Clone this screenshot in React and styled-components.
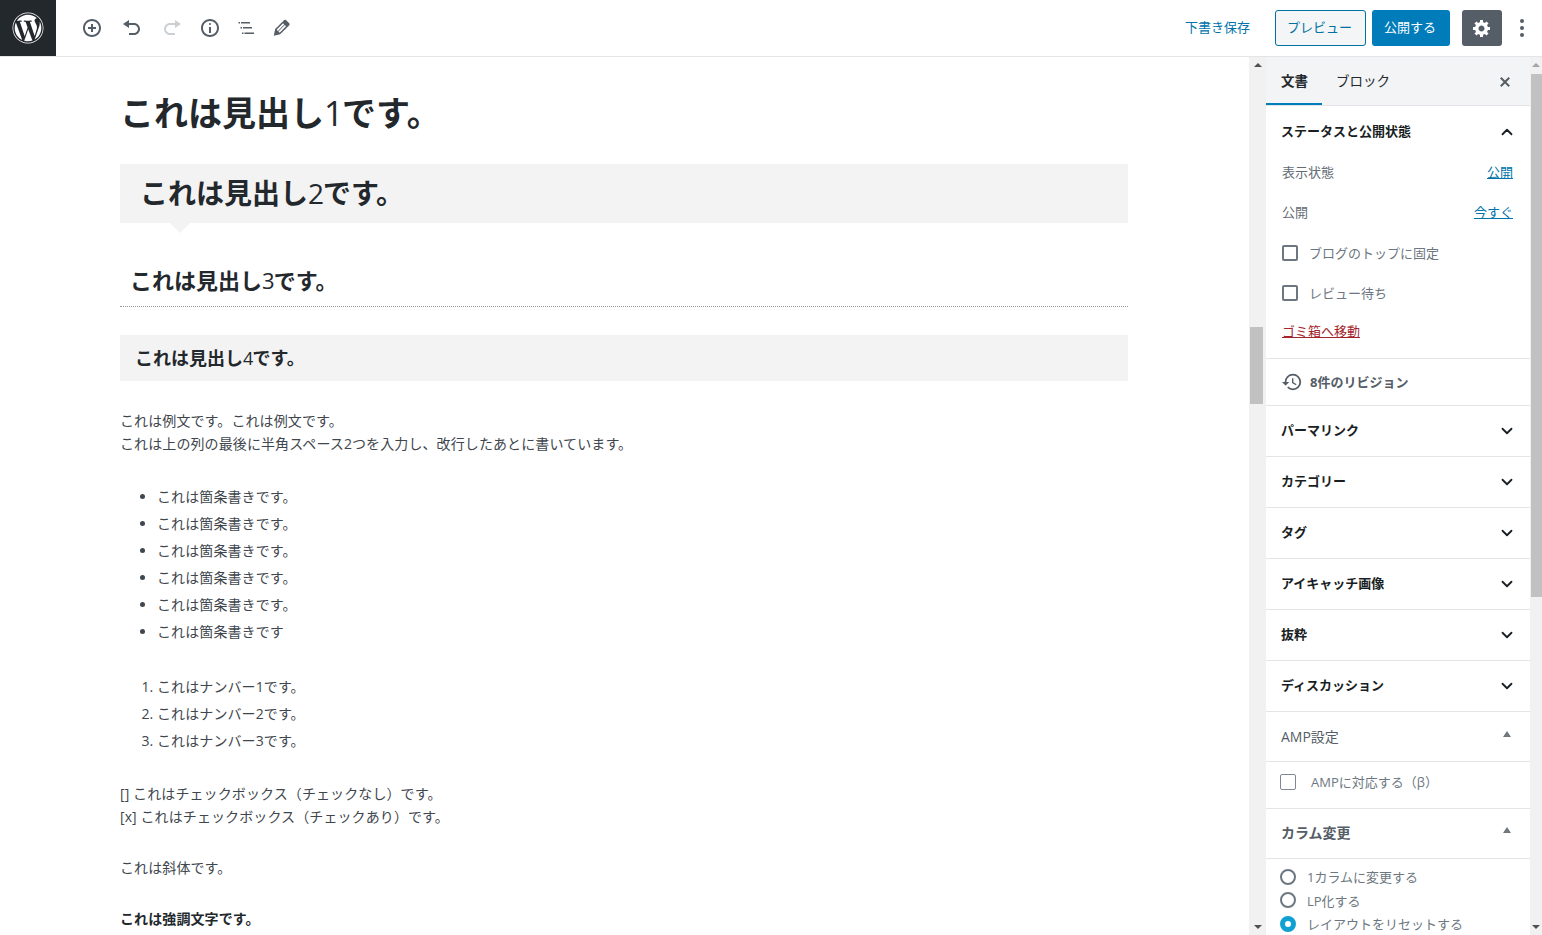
import React from 'react';
import styled, { createGlobalStyle, css } from 'styled-components';
import { FaWordpress } from 'react-icons/fa';
import { MdHistory } from 'react-icons/md';
import { ChevronDown, ChevronUp } from 'lucide-react';

const FONT = `"Open Sans", "Noto Sans CJK JP", sans-serif`;

const GlobalStyle = createGlobalStyle`
  html, body { margin: 0; padding: 0; height: 100%; overflow: hidden; background: #fff; }
  body { font-family: ${FONT}; color: #23282d; }
  * { box-sizing: border-box; }
`;

const Page = styled.div`
  display: flex;
  flex-direction: column;
  width: 1542px;
  height: 935px;
  overflow: hidden;
`;

const Header = styled.header`
  display: flex;
  align-items: center;
  height: 57px;
  flex: none;
  border-bottom: 1px solid #e2e4e7;
`;

const LogoBox = styled.div`
  width: 56px;
  height: 56px;
  background: #23282d;
  color: #fff;
  display: flex;
  align-items: center;
  justify-content: center;
  font-size: 32px;
`;

const Tools = styled.div`
  display: flex;
  align-items: center;
  margin-left: 16px;
  flex: 1;
`;

const ToolButton = styled.div`
  width: ${p => p.$w}px;
  display: flex;
  justify-content: center;
`;

const Icon = styled.svg`
  width: 20px;
  height: 20px;
  fill: ${p => (p.$off ? '#ccd0d4' : '#555d66')};
  display: block;
`;

const SaveDraft = styled.span`
  font-size: 13px;
  color: #0073aa;
  margin: 0 25px 3px 0;
`;

const Button = styled.div`
  height: 36px;
  display: flex;
  align-items: center;
  justify-content: center;
  border-radius: 3px;
  font-size: 13px;
  padding: 0 2px 3px 0;
  ${p =>
    p.$primary
      ? css`
          width: 78px;
          margin-left: 6px;
          background: #007cba;
          color: #fff;
        `
      : css`
          width: 91px;
          background: #f3f5f6;
          border: 1px solid #0071a1;
          color: #0071a1;
        `}
`;

const GearButton = styled.div`
  width: 40px;
  height: 36px;
  margin-left: 12px;
  border-radius: 3px;
  background: #555d66;
  display: flex;
  align-items: center;
  justify-content: center;
`;

const GearIcon = styled.svg`
  width: 20px;
  height: 20px;
  fill: #fff;
`;

const Dots = styled.div`
  width: 40px;
  display: flex;
  flex-direction: column;
  align-items: center;
  gap: 3px;
  i {
    width: 4px;
    height: 4px;
    border-radius: 50%;
    background: #555d66;
  }
`;

const Body = styled.div`
  display: flex;
  flex: 1;
  min-height: 0;
`;

const Editor = styled.main`
  width: 1249px;
  flex: none;
  overflow: hidden;
  padding: 0 121px 0 120px;
`;

const Track = styled.div`
  width: ${p => p.$w}px;
  flex: none;
  background: #f1f1f1;
  display: flex;
  flex-direction: column;
  align-items: center;
  justify-content: space-between;
  position: relative;
`;

const Arrow = styled.i`
  width: 0;
  height: 0;
  margin: 6px 0;
  border-left: 4px solid transparent;
  border-right: 4px solid transparent;
  ${p => (p.$down ? 'border-top' : 'border-bottom')}: 4px solid ${p => p.$c || '#505050'};
`;

const Thumb = styled.div`
  position: absolute;
  left: ${p => p.$l}px;
  right: ${p => p.$r}px;
  top: ${p => p.$top}px;
  height: ${p => p.$h}px;
  background: #c1c1c1;
`;

// the digits in the headings stay at regular weight
const Digit = styled.span`
  font-weight: 400;
  letter-spacing: -0.04em;
`;

const H1 = styled.h1`
  margin: 33px 0 0;
  font-size: 34px;
  line-height: 46px;
  font-weight: 700;
  color: #23282d;
`;

const H2 = styled.h2`
  position: relative;
  margin: 28px 0 0;
  height: 59px;
  padding-left: 20px;
  background: #f3f3f3;
  font-size: 28px;
  line-height: 59px;
  font-weight: 700;
  &::after {
    content: '';
    position: absolute;
    left: 50px;
    top: 59px;
    border-left: 10px solid transparent;
    border-right: 10px solid transparent;
    border-top: 10px solid #f3f3f3;
  }
`;

const H3 = styled.h3`
  margin: 36px 0 0;
  height: 48px;
  padding-left: 10px;
  border-bottom: 1px dotted #999;
  font-size: 22px;
  line-height: 43px;
  font-weight: 700;
`;

const H4 = styled.h4`
  margin: 28px 0 0;
  height: 46px;
  padding-left: 15px;
  background: #f3f3f3;
  font-size: 18px;
  line-height: 46px;
  font-weight: 700;
`;

const Para = styled.p`
  margin: ${p => p.$top}px 0 0;
  font-size: 14px;
  line-height: 23px;
  letter-spacing: 0.1px;
  color: #40464d;
  strong {
    color: #23282d;
  }
`;

const ListBlock = styled.ul`
  margin: 28px 0 0;
  padding: 0 0 0 37px;
  font-size: 14px;
  line-height: 27px;
  letter-spacing: 0.1px;
  color: #40464d;
`;

const NumBlock = styled(ListBlock).attrs({ as: 'ol' })``;

const Sidebar = styled.aside`
  width: 264px;
  flex: none;
  overflow: hidden;
`;

const Tabs = styled.div`
  display: flex;
  align-items: center;
  height: 49px;
  background: #f3f4f5;
  border-bottom: 1px solid #e2e4e7;
  position: relative;
`;

const Tab = styled.div`
  height: 48px;
  display: flex;
  align-items: center;
  padding: 0 14px 2px 15px;
  font-size: 13.5px;
  color: #23282d;
  font-weight: ${p => (p.$on ? 700 : 400)};
  ${p => p.$on && 'box-shadow: inset 0 -2px 0 #007cba;'}
  ${p => !p.$on && 'padding-left: 14px;'}
`;

const CloseIcon = styled.svg`
  position: absolute;
  right: 15px;
  top: 15px;
  width: 20px;
  height: 20px;
  fill: #555d66;
`;

const Panel = styled.section`
  border-bottom: 1px solid #e2e4e7;
`;

const PanelHead = styled.div`
  display: flex;
  align-items: center;
  justify-content: space-between;
  height: 50px;
  padding: 0 14px 4px 15px;
  font-size: 13px;
  font-weight: 700;
  color: #191e23;
  svg {
    margin-top: 3px;
  }
`;

const StatusHead = styled(PanelHead)`
  padding-bottom: 2px;
`;

const OptionHead = styled(PanelHead)`
  height: 49px;
  padding-bottom: ${p => p.$pb}px;
  font-size: 14px;
  font-weight: ${p => p.$weight};
  color: #555d66;
`;

const StatusBody = styled.div`
  margin-top: -4px;
`;

const StatusRow = styled.div`
  display: flex;
  justify-content: space-between;
  align-items: center;
  height: 40px;
  padding: 0 17px 2px 16px;
  font-size: 13px;
  color: #646c75;
  a {
    font-size: 13px;
    color: #0073aa;
    text-decoration: underline;
  }
`;

const CheckRow = styled.label`
  display: flex;
  align-items: center;
  height: 40px;
  padding-left: 16px;
  gap: 11px;
  font-size: 13px;
  color: #6c7781;
`;

const CheckBox = styled.span`
  width: 16px;
  height: 16px;
  flex: none;
  margin-top: 2px;
  border: 2px solid #6c7781;
  border-radius: 2px;
`;

const TrashLink = styled.a`
  display: block;
  margin: 10px 0 0 16px;
  padding-bottom: 17px;
  font-size: 13px;
  line-height: 19px;
  color: #a4262c;
  text-decoration: underline;
`;

const RevisionRow = styled.div`
  display: flex;
  align-items: center;
  gap: 7px;
  height: 46px;
  padding: 0 0 2px 15px;
  font-size: 13px;
  font-weight: 700;
  color: #555d66;
  svg {
    margin-top: 2px;
  }
`;

const Caret = styled.i`
  width: 0;
  height: 0;
  margin: 0 5px 4px 0;
  border-left: 4px solid transparent;
  border-right: 4px solid transparent;
  border-bottom: 6px solid #72777c;
`;

const AmpRow = styled.label`
  display: flex;
  align-items: center;
  height: 46px;
  padding: 0 0 7px 14px;
  gap: 7px;
  font-size: 13px;
  color: #6c7781;
`;

const AmpBox = styled.span`
  width: 16px;
  height: 16px;
  margin-right: 8px;
  border: 1px solid #7e8993;
  border-radius: 2px;
`;

const RadioList = styled.div`
  padding: 6px 0 0 14px;
`;

const RadioRow = styled.label`
  display: flex;
  align-items: center;
  gap: 11px;
  height: 23.5px;
  font-size: 13px;
  color: #6c7781;
`;

const Radio = styled.span`
  width: 16px;
  height: 16px;
  flex: none;
  border-radius: 50%;
  ${p =>
    p.$on
      ? css`
          border: 5px solid #11a0d2;
          background: #fff;
        `
      : css`
          border: 2px solid #6c7781;
        `}
`;

const tools = [
  { w: 40, d: 'M10 1c-5 0-9 4-9 9s4 9 9 9 9-4 9-9-4-9-9-9zm0 16c-3.9 0-7-3.1-7-7s3.1-7 7-7 7 3.1 7 7-3.1 7-7 7zm1-11H9v3H6v2h3v3h2v-3h3V9h-3V6z' },
  { w: 40, d: 'M12 5H7V2L1 6l6 4V7h5c2.2 0 4 1.8 4 4s-1.8 4-4 4H7v2h5c3.3 0 6-2.7 6-6s-2.7-6-6-6z' },
  { w: 40, off: true, d: 'M8 5h5V2l6 4-6 4V7H8c-2.2 0-4 1.8-4 4s1.8 4 4 4h5v2H8c-3.3 0-6-2.7-6-6s2.7-6 6-6z' },
  { w: 36, d: 'M9 15h2V9H9v6zm1-10c-.5 0-1 .5-1 1s.5 1 1 1 1-.5 1-1-.5-1-1-1zm0-4c-5 0-9 4-9 9s4 9 9 9 9-4 9-9-4-9-9-9zm0 16c-3.9 0-7-3.1-7-7s3.1-7 7-7 7 3.1 7 7-3.1 7-7 7z' },
  { w: 36, d: 'M2.5 4H4v1.5H2.5zM5 4h9v1.5H5zM4.5 9H6v1.5H4.5zM7 9h9v1.5H7zM6 14.5h1.5V16H6zM8.5 14.5H18V16H8.5z' },
  { w: 36, box: '1.5 1.5 17.5 17.5', d: 'M13.89 3.39l2.71 2.72c.46.46.42 1.24.03 1.64l-8.01 8.02-5.56 1.16 1.16-5.58s7.6-7.63 7.99-8.03c.39-.39 1.22-.39 1.68.07zm-2.73 2.79l-5.59 5.61 1.11 1.11 5.54-5.65zm-2.97 8.23l5.58-5.6-1.07-1.08-5.59 5.6z' },
];

const GEAR =
  'M18 12h-2.18c-.17.7-.44 1.35-.81 1.93l1.54 1.54-2.1 2.1-1.54-1.54c-.58.36-1.23.63-1.91.79V19H8v-2.18c-.68-.16-1.33-.43-1.91-.79l-1.54 1.54-2.12-2.12 1.54-1.54c-.36-.58-.63-1.23-.79-1.91H1V9.03h2.17c.16-.7.44-1.35.8-1.94L2.43 5.55l2.1-2.1 1.54 1.54c.58-.37 1.24-.64 1.93-.81V2h3v2.18c.68.16 1.33.43 1.91.79l1.54-1.54 2.12 2.12-1.54 1.54c.36.59.64 1.24.8 1.94H18V12zm-8.5 1.5c1.66 0 3-1.34 3-3s-1.34-3-3-3-3 1.34-3 3 1.34 3 3 3z';

const bullets = ['これは箇条書きです。', 'これは箇条書きです。', 'これは箇条書きです。', 'これは箇条書きです。', 'これは箇条書きです。', 'これは箇条書きです'];
const numbers = ['これはナンバー1です。', 'これはナンバー2です。', 'これはナンバー3です。'];
const closedPanels = ['パーマリンク', 'カテゴリー', 'タグ', 'アイキャッチ画像', '抜粋', 'ディスカッション'];

export default function App() {
  return (
    <Page>
      <GlobalStyle />
      <Header>
        <LogoBox>
          <FaWordpress />
        </LogoBox>
        <Tools>
          {tools.map((t, i) => (
            <ToolButton key={i} $w={t.w}>
              <Icon viewBox={t.box || '0 0 20 20'} $off={t.off}>
                <path d={t.d} />
              </Icon>
            </ToolButton>
          ))}
        </Tools>
        <SaveDraft>下書き保存</SaveDraft>
        <Button>プレビュー</Button>
        <Button $primary>公開する</Button>
        <GearButton>
          <GearIcon viewBox="0 0 20 20">
            <path d={GEAR} />
          </GearIcon>
        </GearButton>
        <Dots>
          <i />
          <i />
          <i />
        </Dots>
      </Header>
      <Body>
        <Editor>
          <H1>これは見出し<Digit>1</Digit>です。</H1>
          <H2>これは見出し<Digit>2</Digit>です。</H2>
          <H3>これは見出し<Digit>3</Digit>です。</H3>
          <H4>これは見出し<Digit>4</Digit>です。</H4>
          <Para $top={28}>
            これは例文です。これは例文です。
            <br />
            これは上の列の最後に半角スペース2つを入力し、改行したあとに書いています。
          </Para>
          <ListBlock>
            {bullets.map((t, i) => (
              <li key={i}>{t}</li>
            ))}
          </ListBlock>
          <NumBlock>
            {numbers.map(t => (
              <li key={t}>{t}</li>
            ))}
          </NumBlock>
          <Para $top={28}>
            [] これはチェックボックス（チェックなし）です。
            <br />
            [x] これはチェックボックス（チェックあり）です。
          </Para>
          <Para $top={28}>これは斜体です。</Para>
          <Para $top={28}>
            <strong>これは強調文字です。</strong>
          </Para>
        </Editor>
        <Track $w={17}>
          <Arrow />
          <Thumb $l={1} $r={3} $top={270} $h={77} />
          <Arrow $down />
        </Track>
        <Sidebar>
          <Tabs>
            <Tab $on>文書</Tab>
            <Tab>ブロック</Tab>
            <CloseIcon viewBox="0 0 20 20">
              <path d="M14.95 6.46L11.41 10l3.54 3.54-1.41 1.41L10 11.42l-3.53 3.53-1.42-1.42L8.58 10 5.05 6.47l1.42-1.42L10 8.58l3.54-3.53z" />
            </CloseIcon>
          </Tabs>
          <Panel>
            <StatusHead>
              ステータスと公開状態
              <ChevronUp size={18} strokeWidth={2.4} />
            </StatusHead>
            <StatusBody>
              <StatusRow>
                <span>表示状態</span>
                <a>公開</a>
              </StatusRow>
              <StatusRow>
                <span>公開</span>
                <a>今すぐ</a>
              </StatusRow>
              <CheckRow>
                <CheckBox />
                ブログのトップに固定
              </CheckRow>
              <CheckRow>
                <CheckBox />
                レビュー待ち
              </CheckRow>
              <TrashLink>ゴミ箱へ移動</TrashLink>
            </StatusBody>
          </Panel>
          <Panel>
            <RevisionRow>
              <MdHistory size={22} />
              8件のリビジョン
            </RevisionRow>
          </Panel>
          {closedPanels.map(t => (
            <Panel key={t}>
              <PanelHead>
                {t}
                <ChevronDown size={18} strokeWidth={2.4} />
              </PanelHead>
            </Panel>
          ))}
          <Panel>
            <OptionHead $weight={400} $pb={2}>
              AMP設定
              <Caret />
            </OptionHead>
          </Panel>
          <Panel>
            <AmpRow>
              <AmpBox />
              AMPに対応する（β）
            </AmpRow>
          </Panel>
          <Panel>
            <OptionHead $weight={700} $pb={4}>
              カラム変更
              <Caret />
            </OptionHead>
          </Panel>
          <RadioList>
            <RadioRow>
              <Radio />
              1カラムに変更する
            </RadioRow>
            <RadioRow>
              <Radio />
              LP化する
            </RadioRow>
            <RadioRow>
              <Radio $on />
              レイアウトをリセットする
            </RadioRow>
          </RadioList>
        </Sidebar>
        <Track $w={12}>
          <Arrow $c="#a3a3a3" />
          <Thumb $l={1} $r={0} $top={17} $h={523} />
          <Arrow $down />
        </Track>
      </Body>
    </Page>
  );
}
